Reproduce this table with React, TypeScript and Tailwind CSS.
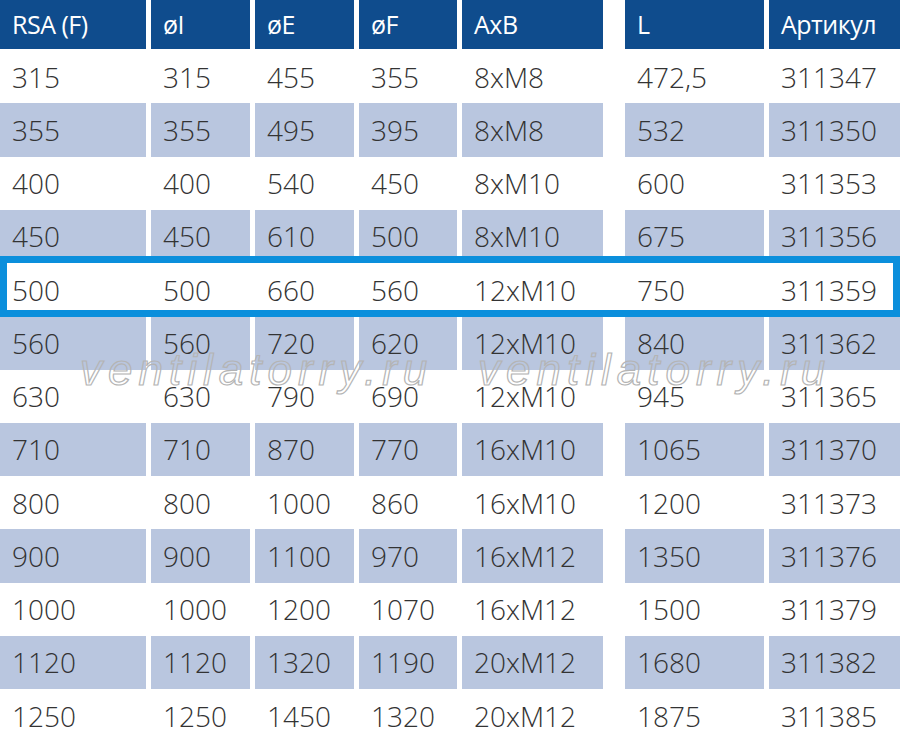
import React from 'react'

const headers = ['RSA (F)', 'øI', 'øE', 'øF', 'AxB', 'L', 'Артикул']

const rows: string[][] = [
  ['315', '315', '455', '355', '8xM8', '472,5', '311347'],
  ['355', '355', '495', '395', '8xM8', '532', '311350'],
  ['400', '400', '540', '450', '8xM10', '600', '311353'],
  ['450', '450', '610', '500', '8xM10', '675', '311356'],
  ['500', '500', '660', '560', '12xM10', '750', '311359'],
  ['560', '560', '720', '620', '12xM10', '840', '311362'],
  ['630', '630', '790', '690', '12xM10', '945', '311365'],
  ['710', '710', '870', '770', '16xM10', '1065', '311370'],
  ['800', '800', '1000', '860', '16xM10', '1200', '311373'],
  ['900', '900', '1100', '970', '16xM12', '1350', '311376'],
  ['1000', '1000', '1200', '1070', '16xM12', '1500', '311379'],
  ['1120', '1120', '1320', '1190', '20xM12', '1680', '311382'],
  ['1250', '1250', '1450', '1320', '20xM12', '1875', '311385'],
]

// widths per column, L column gets the wider gap in front of it
const cols = [
  'w-[146px]',
  'w-[99px]',
  'w-[99px]',
  'w-[98px]',
  'w-[141px]',
  'w-[139px] ml-[17px]',
  'w-[131px]',
]

export default function App() {
  return (
    <div className="relative w-[900px] h-[743px] overflow-hidden bg-white font-['Open_Sans','Liberation_Sans',sans-serif]">
      {/* Header */}
      <div className="flex gap-[5px] h-[50px] pb-[1px]">
        {headers.map((h, i) => (
          <div
            key={h}
            className={`${cols[i]} shrink-0 bg-[#0f4c8d] text-white text-[25px] font-medium tracking-[-0.5px] pl-[12px] flex items-center`}
          >
            {h}
          </div>
        ))}
      </div>

      {/* Rows */}
      {rows.map((r, ri) => (
        <div key={ri} className="flex gap-[5px] h-[53.25px]">
          {r.map((v, ci) => (
            <div
              key={ci}
              className={`${cols[ci]} shrink-0 ${ri % 2 === 1 ? 'bg-[#b9c6df]' : 'bg-white'} text-[#333333] text-[28px] font-light pl-[12px] flex items-center`}
            >
              {v}
            </div>
          ))}
        </div>
      ))}

      {/* Highlighted row frame */}
      <div className="absolute left-0 top-[256px] w-[900px] h-[61px] border-[7px] border-[#0b8fdc]" />

      {/* Watermark */}
      <div className="absolute top-[348px] left-[80px] text-[44px] italic tracking-[6px] font-['Liberation_Sans',sans-serif] text-transparent [-webkit-text-stroke:1.2px_#b4b4b4] leading-none">
        ventilatorry.ru
      </div>
      <div className="absolute top-[348px] left-[478px] text-[44px] italic tracking-[6px] font-['Liberation_Sans',sans-serif] text-transparent [-webkit-text-stroke:1.2px_#b4b4b4] leading-none">
        ventilatorry.ru
      </div>
    </div>
  )
}
